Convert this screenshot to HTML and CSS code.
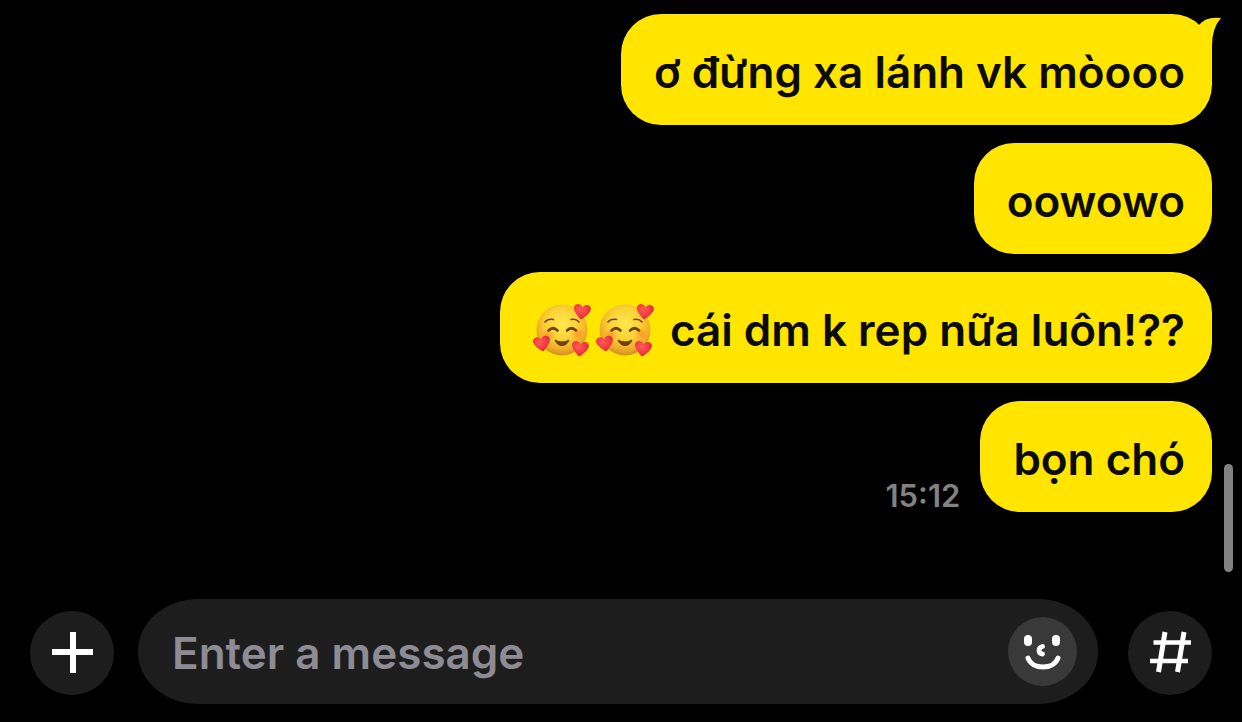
FILE: index.html
```html
<!DOCTYPE html>
<html lang="vi">
<head>
<meta charset="utf-8">
<meta name="viewport" content="width=device-width, initial-scale=1">
<title>Chat</title>
<link rel="stylesheet" href="styles.css">
</head>
<body>
<svg class="defs" aria-hidden="true">
  <defs>
    <radialGradient id="skin" cx="50%" cy="38%" r="62%">
      <stop offset="0" stop-color="#ffe94e"/>
      <stop offset="0.5" stop-color="#fdd136"/>
      <stop offset="0.8" stop-color="#f0ae28"/>
      <stop offset="1" stop-color="#d28f22"/>
    </radialGradient>
    <radialGradient id="blush">
      <stop offset="0" stop-color="#ff8126" stop-opacity="0.7"/>
      <stop offset="1" stop-color="#ff9a26" stop-opacity="0"/>
    </radialGradient>
    <radialGradient id="love" cx="40%" cy="35%" r="70%">
      <stop offset="0" stop-color="#ff5a55"/>
      <stop offset="0.6" stop-color="#f23a44"/>
      <stop offset="1" stop-color="#cf2035"/>
    </radialGradient>
    <path id="heart" d="M0 7.500C-3 5.500-8.500 0-8.500-3.500C-8.500-6-6.500-7.500-4.500-7.500C-2-7.500-.6-6.300 0-4.500C.6-6.300 2-7.500 4.500-7.500C6.500-7.500 8.500-6 8.500-3.500C8.500 0 3 5.500 0 7.500Z" fill="url(#love)"/>
    <symbol id="hearts-face" viewBox="0 0 58 56">
      <circle cx="29" cy="28" r="25.500" fill="url(#skin)"/>
      <ellipse cx="15" cy="33" rx="8" ry="6" fill="url(#blush)"/>
      <ellipse cx="45" cy="32" rx="8" ry="7" fill="url(#blush)"/>
      <g fill="none" stroke="#70420f" stroke-linecap="round">
        <path d="M12 20Q15 16.500 20.500 17.500M38 17.500Q43 16.500 46 20" stroke-width="1.600"/>
        <path d="M15.500 28.500Q20 24 24.500 28.500M34 28.500Q38.500 24 43 28.500" stroke-width="2.600"/>
      </g>
      <path d="M22 38Q29 42 36 38Q34 43.500 29 43.500Q24 43.500 22 38Z" fill="#70420f" stroke="#70420f" stroke-linejoin="round"/>
      <use href="#heart" transform="translate(49 10) rotate(7)"/>
      <use href="#heart" transform="translate(9 42) rotate(-10)"/>
      <use href="#heart" transform="translate(47 47) rotate(7)"/>
    </symbol>
  </defs>
</svg>

<main class="chat">
  <section class="messages" aria-label="Messages">
    <div class="row"><p class="bubble">ơ đừng xa lánh vk mòooo
      <svg class="tail" viewBox="0 0 28 60" aria-hidden="true"><path d="M0 12L15 11Q22 2 37 4Q28 14 28 32V60H0Z"/></svg></p></div>
    <div class="row"><p class="bubble">oowowo</p></div>
    <div class="row"><p class="bubble"><svg class="emoji" role="img" aria-label="🥰"><use href="#hearts-face"/></svg><svg class="emoji" role="img" aria-label="🥰"><use href="#hearts-face"/></svg> cái dm k rep nữa luôn!??</p></div>
    <div class="row"><time class="time">15:12</time><p class="bubble">bọn chó</p></div>
    <div class="scrollbar"></div>
  </section>

  <form class="composer">
    <button class="round" type="button" aria-label="Add">
      <svg width="84" height="84" viewBox="0 0 84 84" fill="none" stroke="#fff" stroke-width="6"><path d="M22 41H63M43 21V62"/></svg>
    </button>
    <div class="field">
      <input class="text" type="text" aria-label="Enter a message" placeholder="Enter a message">
      <button class="sticker" type="button" aria-label="Stickers">
        <svg width="69" height="69" viewBox="0 0 69 69" fill="none" stroke="#fff" stroke-linecap="round">
          <g fill="#fff" stroke="none"><rect x="16" y="18" width="8" height="11" rx="4"/><rect x="44" y="18" width="8" height="11" rx="4"/></g>
          <path d="M34.500 29.500Q31 30.500 31 33.500Q31 36.500 34.500 37" stroke-width="4.800"/>
          <path d="M20 41C24 53 46 53 50 41" stroke-width="5"/>
        </svg>
      </button>
    </div>
    <button class="round" type="button" aria-label="Hashtag search">
      <svg width="84" height="84" viewBox="0 0 84 84" fill="none" stroke="#fff"><path d="M25.500 31.500H63M22 50H60" stroke-width="4.500"/><path d="M37 21L30.500 61M56 21L49.500 61" stroke-width="5"/></svg>
    </button>
  </form>
</main>
</body>
</html>
```
FILE: styles.css
```css
* {
  box-sizing: border-box;
}

body {
  margin: 0;
  background: #000;
  color: #0b0b00;
  font-family: Inter, "Noto Sans", sans-serif;
}

.defs {
  position: absolute;
  width: 0;
  height: 0;
}

.chat {
  display: flex;
  flex-direction: column;
  min-height: 100vh;
}

.messages {
  position: relative;
  flex: 1;
  display: flex;
  flex-direction: column;
  gap: 18px;
  padding: 14px 30px 24px;
}

.row {
  display: flex;
  justify-content: flex-end;
  align-items: flex-end;
  gap: 20px;
}

.bubble {
  position: relative;
  margin: 0;
  padding: 30px 27px 25px 33px;
  border-radius: 40px;
  background: #ffe500;
  font-size: 44px;
  font-weight: 600;
  line-height: 56px;
}

.tail {
  position: absolute;
  top: 0;
  right: 0;
  width: 28px;
  height: 60px;
  overflow: visible;
  fill: #ffe500;
}

.emoji {
  width: 58px;
  height: 56px;
  margin-right: 5px;
  vertical-align: top;
}

.time {
  color: #828282;
  font-size: 31px;
  font-weight: 600;
  line-height: 32px;
}

.scrollbar {
  position: absolute;
  right: 9px;
  bottom: 27px;
  width: 9px;
  height: 108px;
  border-radius: 5px;
  background: #828282;
}

.composer {
  display: flex;
  align-items: center;
  padding: 0 30px 18px;
}

.round,
.sticker {
  display: grid;
  place-items: center;
  flex: none;
  padding: 0;
  border: 0;
  border-radius: 50%;
}

.round {
  width: 84px;
  height: 84px;
  margin-top: 2px;
  background: #1d1d1d;
}

.field {
  flex: 1;
  min-width: 0;
  display: flex;
  align-items: center;
  height: 105px;
  margin: 0 30px 0 24px;
  padding: 0 21px 0 34px;
  border-radius: 60px / 52px;
  background: #1d1d1d;
}

.text {
  flex: 1;
  min-width: 0;
  height: 60px;
  padding: 2px 0 0;
  border: 0;
  outline: 0;
  background: transparent;
  color: #fff;
  font: 600 44px Inter, "Noto Sans", sans-serif;
}

.text::placeholder {
  color: #8d8c94;
  opacity: 1;
}

.sticker {
  width: 69px;
  height: 69px;
  background: #393939;
}
```
